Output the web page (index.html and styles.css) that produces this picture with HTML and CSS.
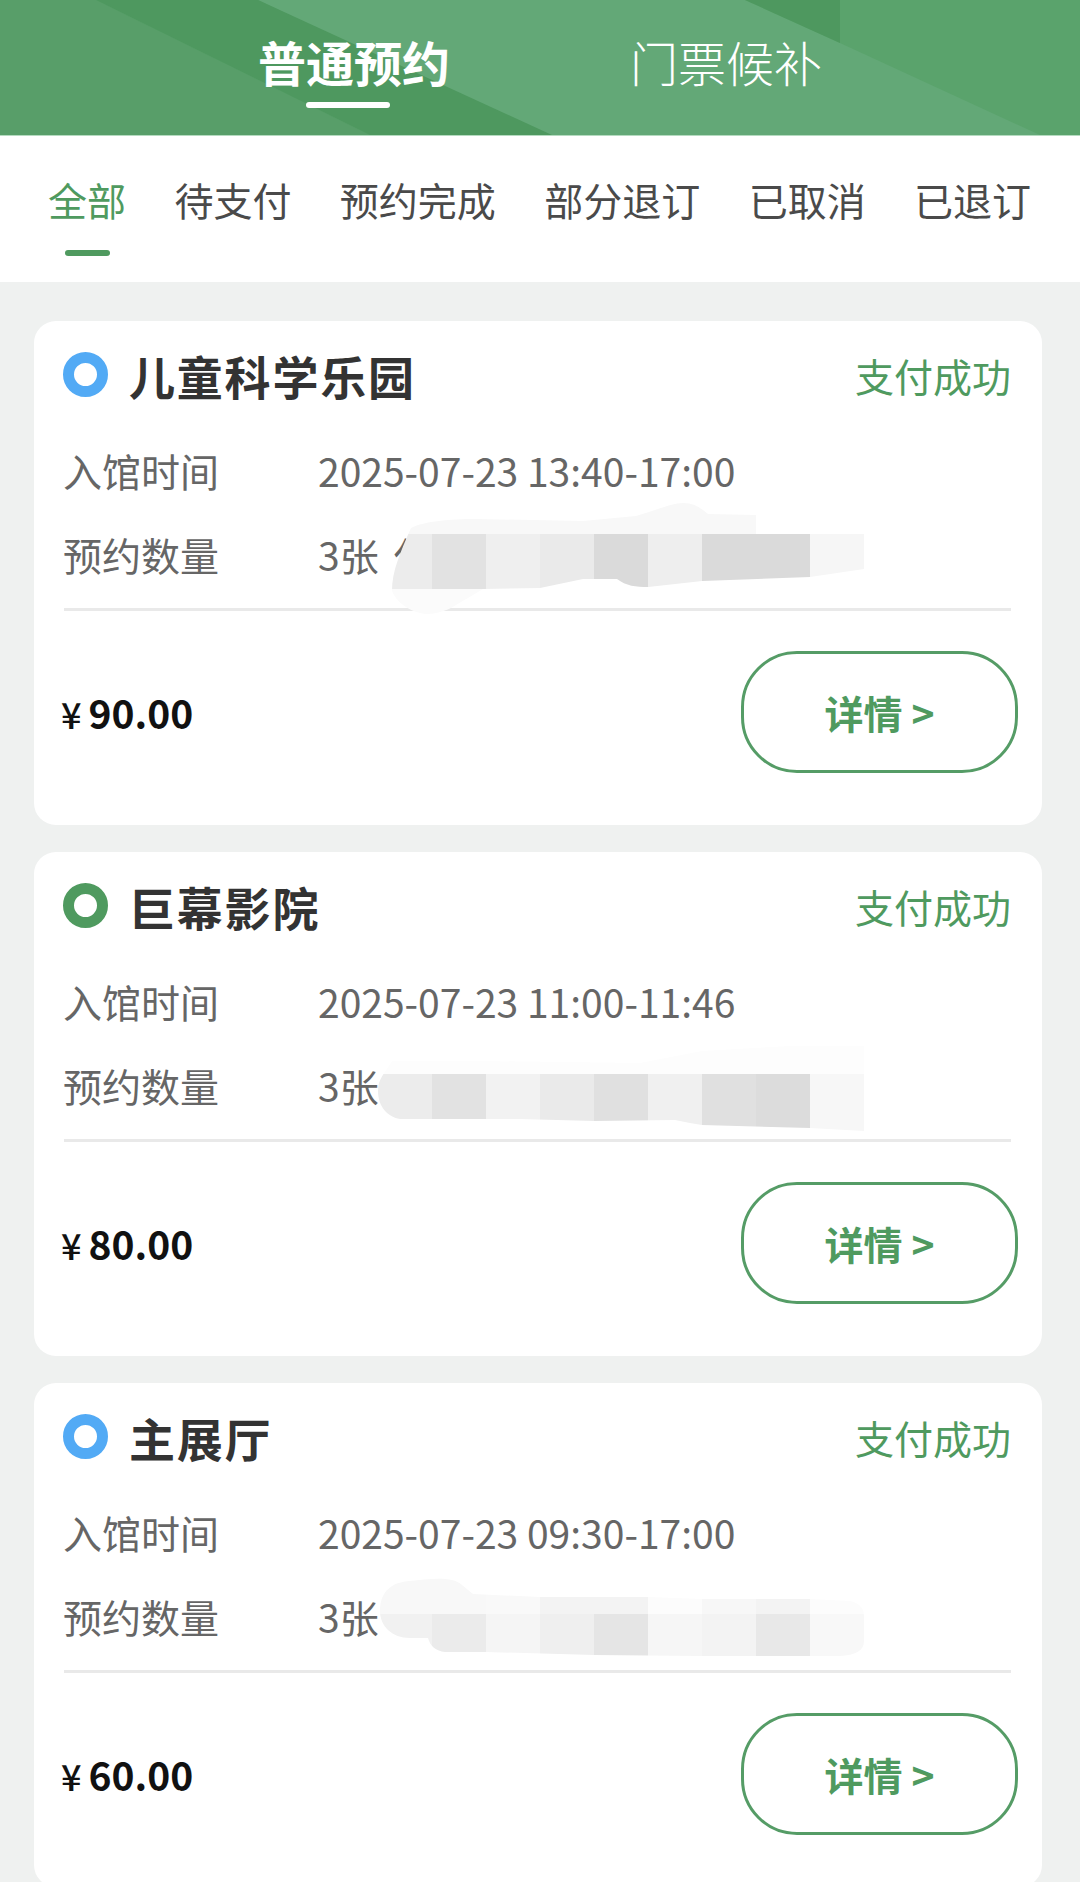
FILE: index.html
```html
<!DOCTYPE html>
<html lang="zh-CN">
<head>
<meta charset="utf-8">
<title>我的预约</title>
<link rel="stylesheet" href="styles.css">
</head>
<body>
<header class="hero">
  <svg class="hero-bg" viewBox="0 0 1080 135" preserveAspectRatio="none" aria-hidden="true">
    <rect width="1080" height="135" fill="#5aa36c"/>
    <polygon points="0,0 96,0 370,135 0,135" fill="#589e69"/>
    <polygon points="258,0 745,0 840,43 1040,135 540,135" fill="#63a877"/>
    <polygon points="96,0 258,0 552,135 370,135" fill="#4e985f"/>
    <polygon points="745,0 840,0 840,43" fill="#4e985f"/>
  </svg>
  <div class="tab tab-on">普通预约<i class="tab-line"></i></div>
  <div class="tab">门票候补</div>
</header>
<nav class="filters">
  <span class="filter filter-on">全部<i class="filter-line"></i></span>
  <span class="filter">待支付</span>
  <span class="filter">预约完成</span>
  <span class="filter">部分退订</span>
  <span class="filter">已取消</span>
  <span class="filter">已退订</span>
</nav>
<main class="list">
  <article class="card">
    <div class="head"><i class="dot dot-blue"></i><h2 class="title">儿童科学乐园</h2><span class="status">支付成功</span></div>
    <div class="row"><span class="label">入馆时间</span><span class="value">2025-07-23 13:40-17:00</span></div>
    <div class="row"><span class="label">预约数量</span><span class="value">3张 <span class="name-tail">仅</span>
      <svg class="smudge smudge-a" viewBox="380 500 490 120" width="490" height="120" aria-hidden="true">
        <defs><clipPath id="c1"><path d="M392 590C392 570 400 552 411 527C425 520 450 518 476 518L583 520L636 515C660 508 672 502 683 502C695 502 702 508 708 513L756 514V533H864V568L810 576L702 580L648 586C636 586 626 585 617 578H583L540 587L483 588L451 607C440 612 432 613 426 613C415 612 398 605 392 590Z"/></clipPath></defs>
        <g clip-path="url(#c1)">
          <rect x="380" y="500" width="490" height="33" fill="#f8f8f8"/>
          <rect x="380" y="588" width="490" height="30" fill="#fbfbfb"/>
          <rect x="380" y="533" width="52" height="55" fill="#ececec"/>
          <rect x="432" y="533" width="54" height="55" fill="#e2e2e2"/>
          <rect x="486" y="533" width="54" height="55" fill="#efefef"/>
          <rect x="540" y="533" width="54" height="55" fill="#eaeaea"/>
          <rect x="594" y="533" width="54" height="55" fill="#dadada"/>
          <rect x="648" y="533" width="54" height="55" fill="#eeeeee"/>
          <rect x="702" y="533" width="108" height="55" fill="#dadada"/>
          <rect x="810" y="533" width="54" height="55" fill="#f6f6f6"/>
        </g>
      </svg></span></div>
    <div class="foot"><span class="price"><small class="yen">¥</small>90.00</span><button class="detail">详情 &gt;</button></div>
  </article>
  <article class="card">
    <div class="head"><i class="dot dot-green"></i><h2 class="title">巨幕影院</h2><span class="status">支付成功</span></div>
    <div class="row"><span class="label">入馆时间</span><span class="value">2025-07-23 11:00-11:46</span></div>
    <div class="row"><span class="label">预约数量</span><span class="value">3张
      <svg class="smudge smudge-b" viewBox="370 1040 500 100" width="500" height="100" aria-hidden="true">
        <defs><clipPath id="c2"><path d="M378 1090C378 1078 384 1073 392 1060L480 1060L640 1062L702 1050L790 1045H864V1130L810 1127L702 1124L690 1122L675 1119L594 1120L520 1118H400C388 1116 378 1106 378 1090Z"/></clipPath></defs>
        <g clip-path="url(#c2)">
          <rect x="370" y="1040" width="500" height="33" fill="#fdfdfd"/>
          <rect x="370" y="1073" width="62" height="60" fill="#ececec"/>
          <rect x="432" y="1073" width="54" height="60" fill="#e2e2e2"/>
          <rect x="486" y="1073" width="54" height="60" fill="#f2f2f2"/>
          <rect x="540" y="1073" width="54" height="60" fill="#eaeaea"/>
          <rect x="594" y="1073" width="54" height="60" fill="#e0e0e0"/>
          <rect x="648" y="1073" width="54" height="60" fill="#f0f0f0"/>
          <rect x="702" y="1073" width="54" height="60" fill="#e0e0e0"/>
          <rect x="756" y="1073" width="54" height="60" fill="#dcdcdc"/>
          <rect x="810" y="1073" width="54" height="60" fill="#f7f7f7"/>
        </g>
      </svg></span></div>
    <div class="foot"><span class="price"><small class="yen">¥</small>80.00</span><button class="detail">详情 &gt;</button></div>
  </article>
  <article class="card">
    <div class="head"><i class="dot dot-blue"></i><h2 class="title">主展厅</h2><span class="status">支付成功</span></div>
    <div class="row"><span class="label">入馆时间</span><span class="value">2025-07-23 09:30-17:00</span></div>
    <div class="row"><span class="label">预约数量</span><span class="value">3张
      <svg class="smudge smudge-c" viewBox="370 1570 500 100" width="500" height="100" aria-hidden="true">
        <defs><clipPath id="c3"><path d="M380 1610C380 1590 392 1581 410 1580C430 1578 452 1575 462 1584L473 1593L540 1596H648L702 1598H810L850 1600C860 1602 864 1608 864 1615V1640C864 1650 855 1654 840 1655L702 1655L594 1654L486 1651H445C436 1650 430 1645 428 1637H410C392 1637 380 1625 380 1610Z"/></clipPath></defs>
        <g clip-path="url(#c3)">
          <rect x="370" y="1570" width="116" height="43" fill="#f8f8f8"/>
          <rect x="486" y="1570" width="54" height="43" fill="#f9f9f9"/>
          <rect x="540" y="1570" width="108" height="43" fill="#f3f3f3"/>
          <rect x="648" y="1570" width="54" height="43" fill="#fcfcfc"/>
          <rect x="702" y="1570" width="54" height="43" fill="#f7f7f7"/>
          <rect x="756" y="1570" width="54" height="43" fill="#f3f3f3"/>
          <rect x="810" y="1570" width="54" height="43" fill="#fcfcfc"/>
          <rect x="370" y="1613" width="62" height="55" fill="#f1f1f1"/>
          <rect x="432" y="1613" width="54" height="55" fill="#ebebeb"/>
          <rect x="486" y="1613" width="54" height="55" fill="#f5f5f5"/>
          <rect x="540" y="1613" width="54" height="55" fill="#efefef"/>
          <rect x="594" y="1613" width="54" height="55" fill="#e5e5e5"/>
          <rect x="648" y="1613" width="54" height="55" fill="#f6f6f6"/>
          <rect x="702" y="1613" width="54" height="55" fill="#f3f3f3"/>
          <rect x="756" y="1613" width="54" height="55" fill="#e8e8e8"/>
          <rect x="810" y="1613" width="54" height="55" fill="#f8f8f8"/>
        </g>
      </svg></span></div>
    <div class="foot"><span class="price"><small class="yen">¥</small>60.00</span><button class="detail">详情 &gt;</button></div>
  </article>
</main>
</body>
</html>
```
FILE: styles.css
```css
* { box-sizing: border-box; }
html, body { margin: 0; height: 1882px; overflow: hidden; }
body {
  background: #eff1f0;
  font-family: "Noto Sans CJK SC", "Noto Sans", sans-serif;
  color: #333;
}
.hero {
  position: relative;
  height: 136px;
  display: flex;
  padding-left: 258px;
  gap: 180px;
  overflow: hidden;
  border-bottom: 1px solid #b5dbc0;
}
.hero-bg { position: absolute; inset: 0; width: 100%; height: 135px; }
.tab {
  position: relative;
  font-size: 48px;
  line-height: 123px;
  color: #fff;
  font-weight: 300;
}
.tab-on { font-weight: 700; }
.tab-line {
  position: absolute;
  left: 48px;
  top: 102px;
  width: 84px;
  height: 6px;
  border-radius: 3px;
  background: #fff;
}
.filters {
  height: 146px;
  background: #fff;
  display: flex;
  gap: 48.4px;
  padding: 40px 0 0 48px;
  font-size: 39px;
  line-height: 46px;
  color: #4a4a4a;
  font-weight: 400;
}
.filter { position: relative; }
.filter-on { color: #4f9a5f; }
.filter-line {
  position: absolute;
  left: 17px;
  top: 74px;
  width: 45px;
  height: 6px;
  border-radius: 3px;
  background: #4f9a5f;
}
.list {
  padding: 39px 38px 0 34px;
  display: flex;
  flex-direction: column;
  gap: 27px;
}
.card {
  flex: none;
  height: 504px;
  background: #fff;
  border-radius: 22px;
  padding: 0 31px 0 30px;
}
.head {
  height: 107px;
  display: flex;
  align-items: center;
}
.dot {
  flex: none;
  width: 45px;
  height: 45px;
  border-radius: 50%;
  border: 11px solid;
  background: #fff;
  margin-left: -1px;
}
.dot-blue { border-color: #52aaf5; }
.dot-green { border-color: #4f9a5f; }
.title {
  margin: 0 0 0 21px;
  font-size: 46px;
  letter-spacing: 1.8px;
  line-height: 60px;
  font-weight: 700;
  color: #333;
}
.status {
  margin-left: auto;
  font-size: 39px;
  line-height: 60px;
  color: #4f9a5f;
  font-weight: 400;
}
.row {
  height: 84px;
  display: flex;
  align-items: center;
  margin-left: -1px;
  font-size: 39px;
  color: #666;
  font-weight: 400;
}
.label { width: 255px; }
.value { position: relative; }
.name-tail { margin-left: 6px; }
.smudge { position: absolute; max-width: none; }
.smudge-a { left: 62px; top: -25px; }
.smudge-b { left: 52px; top: -16px; }
.smudge-c { left: 52px; top: -17px; }
.foot {
  margin-top: 12px;
  border-top: 3px solid #e9e9e9;
  padding-top: 40px;
  display: flex;
  align-items: center;
  justify-content: space-between;
}
.price {
  margin-left: -3px;
  font-size: 39px;
  font-weight: 700;
  color: #111;
}
.yen { font-size: 36px; font-weight: 500; margin-right: 7px; }
.detail {
  width: 277px;
  height: 122px;
  margin-right: -7px;
  border: 3px solid #559c66;
  border-radius: 56px;
  background: #fff;
  color: #4f9a5f;
  font: 700 39px "Noto Sans CJK SC", sans-serif;
}
```
